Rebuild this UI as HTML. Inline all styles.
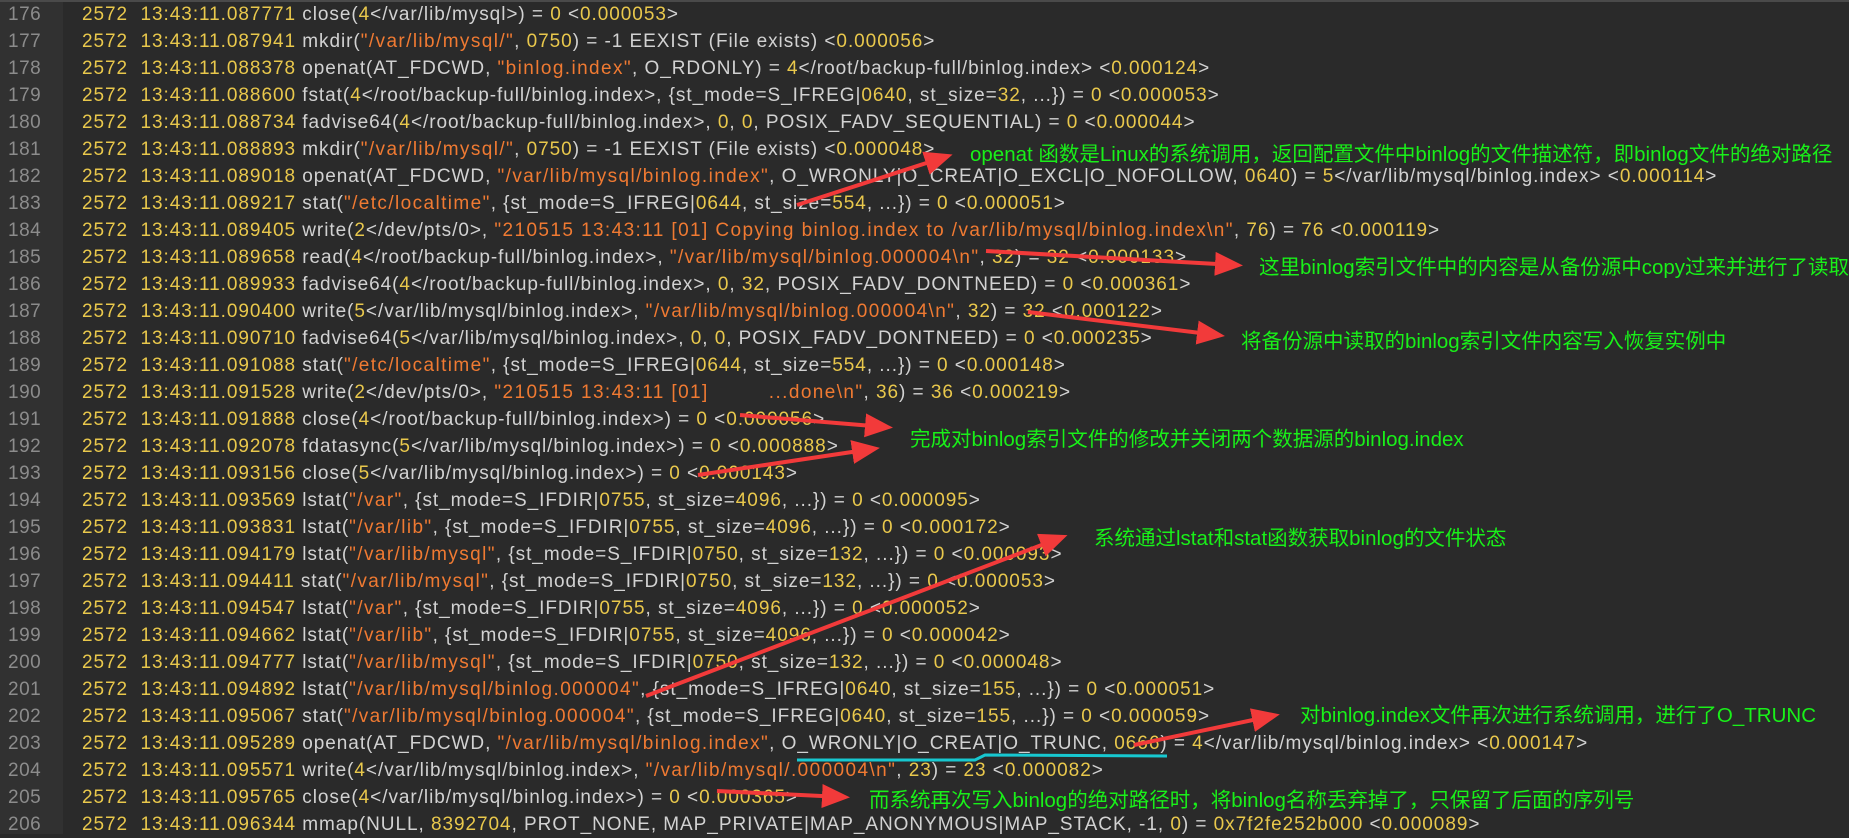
<!DOCTYPE html>
<html><head><meta charset="utf-8"><style>
html,body{margin:0;padding:0;}
body{width:1849px;height:834px;background:#2a2a2a;position:relative;overflow:hidden;font-family:"Liberation Sans","Noto Sans CJK SC",sans-serif;}
#gut{position:absolute;left:0;top:0;width:63px;height:834px;background:#313131;}
#top{position:absolute;left:0;top:0;width:1849px;height:2px;background:#4a4a4a;}
.l{position:absolute;left:0;height:27px;line-height:27px;font-size:19px;white-space:pre;color:#d2d2d2;letter-spacing:0.95px;}
.l .ln{position:absolute;left:8px;color:#8c8c8c;letter-spacing:0.5px;}
.l .c{position:absolute;left:82px;}
b{font-weight:normal;color:#e9c84c;}
i{font-style:normal;color:#f07a32;letter-spacing:1.4px;}
.a{position:absolute;color:#19f019;font-size:20.5px;white-space:nowrap;font-family:"Liberation Sans","Noto Sans CJK SC",sans-serif;}
svg{position:absolute;left:0;top:0;}
</style></head><body>
<div id="gut"></div><div id="top"></div>
<div class="l" style="top:1px"><span class="ln">176</span><span class="c"><b>2572  13:43:11.087771</b> close(<b>4</b>&lt;/var/lib/mysql&gt;) = <b>0</b> &lt;<b>0.000053</b>&gt;</span></div>
<div class="l" style="top:28px"><span class="ln">177</span><span class="c"><b>2572  13:43:11.087941</b> mkdir(<i>"/var/lib/mysql/"</i>, <b>0750</b>) = -1 EEXIST (File exists) &lt;<b>0.000056</b>&gt;</span></div>
<div class="l" style="top:55px"><span class="ln">178</span><span class="c"><b>2572  13:43:11.088378</b> openat(AT_FDCWD, <i>"binlog.index"</i>, O_RDONLY) = <b>4</b>&lt;/root/backup-full/binlog.index&gt; &lt;<b>0.000124</b>&gt;</span></div>
<div class="l" style="top:82px"><span class="ln">179</span><span class="c"><b>2572  13:43:11.088600</b> fstat(<b>4</b>&lt;/root/backup-full/binlog.index&gt;, {st_mode=S_IFREG|<b>0640</b>, st_size=<b>32</b>, ...}) = <b>0</b> &lt;<b>0.000053</b>&gt;</span></div>
<div class="l" style="top:109px"><span class="ln">180</span><span class="c"><b>2572  13:43:11.088734</b> fadvise64(<b>4</b>&lt;/root/backup-full/binlog.index&gt;, <b>0</b>, <b>0</b>, POSIX_FADV_SEQUENTIAL) = <b>0</b> &lt;<b>0.000044</b>&gt;</span></div>
<div class="l" style="top:136px"><span class="ln">181</span><span class="c"><b>2572  13:43:11.088893</b> mkdir(<i>"/var/lib/mysql/"</i>, <b>0750</b>) = -1 EEXIST (File exists) &lt;<b>0.000048</b>&gt;</span></div>
<div class="l" style="top:163px"><span class="ln">182</span><span class="c"><b>2572  13:43:11.089018</b> openat(AT_FDCWD, <i>"/var/lib/mysql/binlog.index"</i>, O_WRONLY|O_CREAT|O_EXCL|O_NOFOLLOW, <b>0640</b>) = <b>5</b>&lt;/var/lib/mysql/binlog.index&gt; &lt;<b>0.000114</b>&gt;</span></div>
<div class="l" style="top:190px"><span class="ln">183</span><span class="c"><b>2572  13:43:11.089217</b> stat(<i>"/etc/localtime"</i>, {st_mode=S_IFREG|<b>0644</b>, st_size=<b>554</b>, ...}) = <b>0</b> &lt;<b>0.000051</b>&gt;</span></div>
<div class="l" style="top:217px"><span class="ln">184</span><span class="c"><b>2572  13:43:11.089405</b> write(<b>2</b>&lt;/dev/pts/0&gt;, <i>"210515 13:43:11 [01] Copying binlog.index to /var/lib/mysql/binlog.index\n"</i>, <b>76</b>) = <b>76</b> &lt;<b>0.000119</b>&gt;</span></div>
<div class="l" style="top:244px"><span class="ln">185</span><span class="c"><b>2572  13:43:11.089658</b> read(<b>4</b>&lt;/root/backup-full/binlog.index&gt;, <i>"/var/lib/mysql/binlog.000004\n"</i>, <b>32</b>) = <b>32</b> &lt;<b>0.000133</b>&gt;</span></div>
<div class="l" style="top:271px"><span class="ln">186</span><span class="c"><b>2572  13:43:11.089933</b> fadvise64(<b>4</b>&lt;/root/backup-full/binlog.index&gt;, <b>0</b>, <b>32</b>, POSIX_FADV_DONTNEED) = <b>0</b> &lt;<b>0.000361</b>&gt;</span></div>
<div class="l" style="top:298px"><span class="ln">187</span><span class="c"><b>2572  13:43:11.090400</b> write(<b>5</b>&lt;/var/lib/mysql/binlog.index&gt;, <i>"/var/lib/mysql/binlog.000004\n"</i>, <b>32</b>) = <b>32</b> &lt;<b>0.000122</b>&gt;</span></div>
<div class="l" style="top:325px"><span class="ln">188</span><span class="c"><b>2572  13:43:11.090710</b> fadvise64(<b>5</b>&lt;/var/lib/mysql/binlog.index&gt;, <b>0</b>, <b>0</b>, POSIX_FADV_DONTNEED) = <b>0</b> &lt;<b>0.000235</b>&gt;</span></div>
<div class="l" style="top:352px"><span class="ln">189</span><span class="c"><b>2572  13:43:11.091088</b> stat(<i>"/etc/localtime"</i>, {st_mode=S_IFREG|<b>0644</b>, st_size=<b>554</b>, ...}) = <b>0</b> &lt;<b>0.000148</b>&gt;</span></div>
<div class="l" style="top:379px"><span class="ln">190</span><span class="c"><b>2572  13:43:11.091528</b> write(<b>2</b>&lt;/dev/pts/0&gt;, <i>"210515 13:43:11 [01]         ...done\n"</i>, <b>36</b>) = <b>36</b> &lt;<b>0.000219</b>&gt;</span></div>
<div class="l" style="top:406px"><span class="ln">191</span><span class="c"><b>2572  13:43:11.091888</b> close(<b>4</b>&lt;/root/backup-full/binlog.index&gt;) = <b>0</b> &lt;<b>0.000056</b>&gt;</span></div>
<div class="l" style="top:433px"><span class="ln">192</span><span class="c"><b>2572  13:43:11.092078</b> fdatasync(<b>5</b>&lt;/var/lib/mysql/binlog.index&gt;) = <b>0</b> &lt;<b>0.000888</b>&gt;</span></div>
<div class="l" style="top:460px"><span class="ln">193</span><span class="c"><b>2572  13:43:11.093156</b> close(<b>5</b>&lt;/var/lib/mysql/binlog.index&gt;) = <b>0</b> &lt;<b>0.000143</b>&gt;</span></div>
<div class="l" style="top:487px"><span class="ln">194</span><span class="c"><b>2572  13:43:11.093569</b> lstat(<i>"/var"</i>, {st_mode=S_IFDIR|<b>0755</b>, st_size=<b>4096</b>, ...}) = <b>0</b> &lt;<b>0.000095</b>&gt;</span></div>
<div class="l" style="top:514px"><span class="ln">195</span><span class="c"><b>2572  13:43:11.093831</b> lstat(<i>"/var/lib"</i>, {st_mode=S_IFDIR|<b>0755</b>, st_size=<b>4096</b>, ...}) = <b>0</b> &lt;<b>0.000172</b>&gt;</span></div>
<div class="l" style="top:541px"><span class="ln">196</span><span class="c"><b>2572  13:43:11.094179</b> lstat(<i>"/var/lib/mysql"</i>, {st_mode=S_IFDIR|<b>0750</b>, st_size=<b>132</b>, ...}) = <b>0</b> &lt;<b>0.000093</b>&gt;</span></div>
<div class="l" style="top:568px"><span class="ln">197</span><span class="c"><b>2572  13:43:11.094411</b> stat(<i>"/var/lib/mysql"</i>, {st_mode=S_IFDIR|<b>0750</b>, st_size=<b>132</b>, ...}) = <b>0</b> &lt;<b>0.000053</b>&gt;</span></div>
<div class="l" style="top:595px"><span class="ln">198</span><span class="c"><b>2572  13:43:11.094547</b> lstat(<i>"/var"</i>, {st_mode=S_IFDIR|<b>0755</b>, st_size=<b>4096</b>, ...}) = <b>0</b> &lt;<b>0.000052</b>&gt;</span></div>
<div class="l" style="top:622px"><span class="ln">199</span><span class="c"><b>2572  13:43:11.094662</b> lstat(<i>"/var/lib"</i>, {st_mode=S_IFDIR|<b>0755</b>, st_size=<b>4096</b>, ...}) = <b>0</b> &lt;<b>0.000042</b>&gt;</span></div>
<div class="l" style="top:649px"><span class="ln">200</span><span class="c"><b>2572  13:43:11.094777</b> lstat(<i>"/var/lib/mysql"</i>, {st_mode=S_IFDIR|<b>0750</b>, st_size=<b>132</b>, ...}) = <b>0</b> &lt;<b>0.000048</b>&gt;</span></div>
<div class="l" style="top:676px"><span class="ln">201</span><span class="c"><b>2572  13:43:11.094892</b> lstat(<i>"/var/lib/mysql/binlog.000004"</i>, {st_mode=S_IFREG|<b>0640</b>, st_size=<b>155</b>, ...}) = <b>0</b> &lt;<b>0.000051</b>&gt;</span></div>
<div class="l" style="top:703px"><span class="ln">202</span><span class="c"><b>2572  13:43:11.095067</b> stat(<i>"/var/lib/mysql/binlog.000004"</i>, {st_mode=S_IFREG|<b>0640</b>, st_size=<b>155</b>, ...}) = <b>0</b> &lt;<b>0.000059</b>&gt;</span></div>
<div class="l" style="top:730px"><span class="ln">203</span><span class="c"><b>2572  13:43:11.095289</b> openat(AT_FDCWD, <i>"/var/lib/mysql/binlog.index"</i>, O_WRONLY|O_CREAT|O_TRUNC, <b>0666</b>) = <b>4</b>&lt;/var/lib/mysql/binlog.index&gt; &lt;<b>0.000147</b>&gt;</span></div>
<div class="l" style="top:757px"><span class="ln">204</span><span class="c"><b>2572  13:43:11.095571</b> write(<b>4</b>&lt;/var/lib/mysql/binlog.index&gt;, <i>"/var/lib/mysql/.000004\n"</i>, <b>23</b>) = <b>23</b> &lt;<b>0.000082</b>&gt;</span></div>
<div class="l" style="top:784px"><span class="ln">205</span><span class="c"><b>2572  13:43:11.095765</b> close(<b>4</b>&lt;/var/lib/mysql/binlog.index&gt;) = <b>0</b> &lt;<b>0.000365</b>&gt;</span></div>
<div class="l" style="top:811px"><span class="ln">206</span><span class="c"><b>2572  13:43:11.096344</b> mmap(NULL, <b>8392704</b>, PROT_NONE, MAP_PRIVATE|MAP_ANONYMOUS|MAP_STACK, -1, <b>0</b>) = <b>0x7f2fe252b000</b> &lt;<b>0.000089</b>&gt;</span></div>

<svg width="1849" height="834" viewBox="0 0 1849 834">
<defs><marker id="ah" markerWidth="7" markerHeight="6" refX="5" refY="3" orient="auto" markerUnits="strokeWidth"><path d="M0,0 L7,3 L0,6 Z" fill="#f23a3a"/></marker></defs>
<g stroke="#f23a3a" stroke-width="4" fill="none" marker-end="url(#ah)">
<line x1="797" y1="205" x2="945" y2="157"/>
<line x1="986" y1="251" x2="1235" y2="265"/>
<line x1="1028" y1="312" x2="1217" y2="335"/>
<line x1="740" y1="415" x2="885" y2="427"/>
<line x1="698" y1="475" x2="872" y2="449"/>
<line x1="646" y1="696" x2="1060" y2="538"/>
<line x1="1134" y1="745" x2="1272" y2="716"/>
<line x1="717" y1="791" x2="842" y2="797"/>
</g>
<path d="M797,760 L975,760 L985,755 L1167,756" stroke="#17c8d0" stroke-width="3" fill="none"/>
</svg>

<div class="a" style="left:970px;top:137px">openat 函数是Linux的系统调用，返回配置文件中binlog的文件描述符，即binlog文件的绝对路径</div>
<div class="a" style="left:1259px;top:250px">这里binlog索引文件中的内容是从备份源中copy过来并进行了读取</div>
<div class="a" style="left:1241px;top:324px">将备份源中读取的binlog索引文件内容写入恢复实例中</div>
<div class="a" style="left:910px;top:422px">完成对binlog索引文件的修改并关闭两个数据源的binlog.index</div>
<div class="a" style="left:1094px;top:521px">系统通过lstat和stat函数获取binlog的文件状态</div>
<div class="a" style="left:1300px;top:698px">对binlog.index文件再次进行系统调用，进行了O_TRUNC</div>
<div class="a" style="left:869px;top:783px">而系统再次写入binlog的绝对路径时，将binlog名称丢弃掉了，只保留了后面的序列号</div>
</body></html>
